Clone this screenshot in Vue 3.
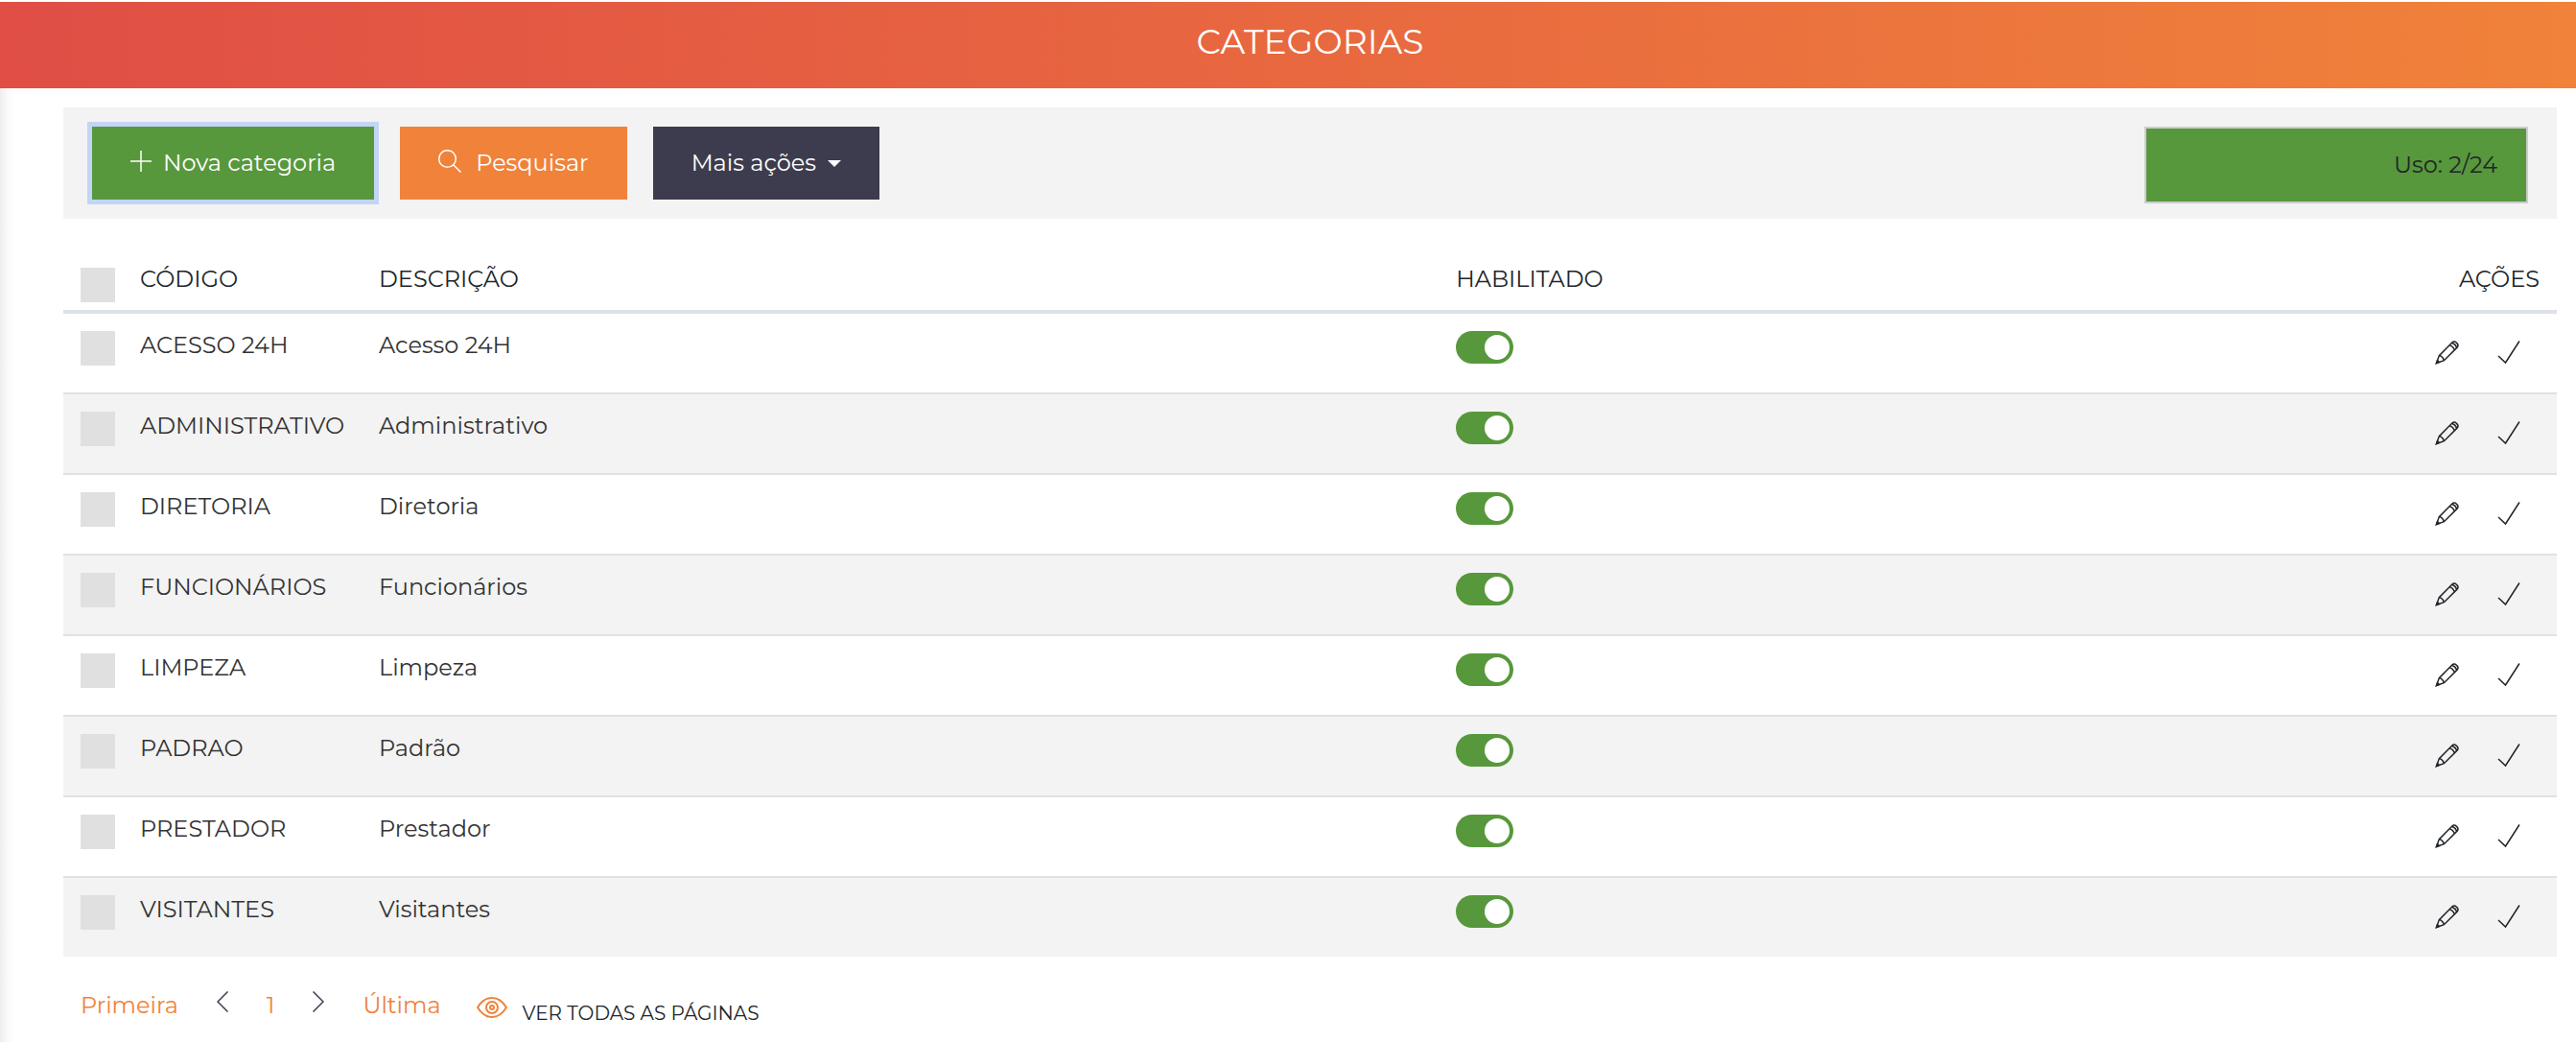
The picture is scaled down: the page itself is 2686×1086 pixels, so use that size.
<template>
  <div class="page">
    <header class="page-header">
      <h1>CATEGORIAS</h1>
    </header>

    <main class="content">
      <div class="toolbar">
        <button type="button" class="btn btn-new">
          <svg width="22" height="22" viewBox="0 0 22 22">
            <path d="M11 0v22M0 11h22" />
          </svg>
          <span>Nova categoria</span>
        </button>
        <button type="button" class="btn btn-search">
          <svg width="24" height="24" viewBox="0 0 24 24">
            <circle cx="9.5" cy="9.5" r="8.8" />
            <path d="M16 16l7.5 7.5" />
          </svg>
          <span>Pesquisar</span>
        </button>
        <button type="button" class="btn btn-more" aria-haspopup="true">
          <span>Mais ações</span>
          <span class="caret"></span>
        </button>
        <div class="usage">Uso: {{ usage.used }}/{{ usage.total }}</div>
      </div>

      <table class="categories">
        <colgroup>
          <col class="col-check" />
          <col class="col-code" />
          <col class="col-description" />
          <col />
          <col class="col-actions" />
        </colgroup>
        <thead>
          <tr>
            <th>
              <input v-model="allSelected" type="checkbox" class="check" aria-label="Selecionar todas" />
            </th>
            <th>CÓDIGO</th>
            <th>DESCRIÇÃO</th>
            <th>HABILITADO</th>
            <th class="right">AÇÕES</th>
          </tr>
        </thead>
        <tbody>
          <tr v-for="category in categories" :key="category.code">
            <td>
              <input v-model="category.selected" type="checkbox" class="check" :aria-label="category.code" />
            </td>
            <td>{{ category.code }}</td>
            <td>{{ category.description }}</td>
            <td>
              <input
                v-model="category.enabled"
                type="checkbox"
                role="switch"
                class="switch"
                :aria-label="'Habilitar ' + category.description"
              />
            </td>
            <td>
              <div class="actions">
                <button type="button" class="icon-btn" aria-label="Editar">
                  <svg width="26" height="26" viewBox="0 0 26 26">
                    <path d="M1.5 24.5l2.8-7.9L17.6 3.2a3.4 3.4 0 0 1 4.8 0l.4.4a3.4 3.4 0 0 1 0 4.800L9.400 21.700z" />
                    <path d="M4.300 16.600c2.300.6 4.300 2.600 5.100 5.100M15.200 5.600c2.300.8 4.300 2.800 5.200 5.200M17.600 3.200c2.300.8 4.300 2.800 5.200 5.200" />
                    <path class="tip" d="M1.500 24.500l1-2.800 1.800 1.800z" />
                  </svg>
                </button>
                <button type="button" class="icon-btn" aria-label="Confirmar">
                  <svg width="26" height="26" viewBox="0 0 26 26">
                    <path d="M2 17l7.500 7L24 1.500" />
                  </svg>
                </button>
              </div>
            </td>
          </tr>
        </tbody>
      </table>

      <nav class="pagination">
        <a href="#">Primeira</a>
        <a href="#" class="arrow" aria-label="Anterior">
          <svg width="12" height="22" viewBox="0 0 12 22">
            <path d="M11.5 0.5L1 11l10.500 10.500" />
          </svg>
        </a>
        <a href="#">1</a>
        <a href="#" class="arrow" aria-label="Próxima">
          <svg width="12" height="22" viewBox="0 0 12 22">
            <path d="M0.5 0.5L11 11L0.500 21.500" />
          </svg>
        </a>
        <a href="#">Última</a>
        <a href="#" class="show-all">
          <svg width="32" height="24" viewBox="0 0 32 24">
            <path d="M1 12C5 5.500 10 2 16 2s11 3.500 15 10c-4 6.500-9 10-15 10S5 18.500 1 12z" />
            <circle cx="16" cy="12" r="6" />
            <circle cx="16" cy="12" r="2" />
          </svg>
          <span>VER TODAS AS PÁGINAS</span>
        </a>
      </nav>
    </main>
  </div>
</template>

<script setup>
import { computed, ref } from 'vue';

const usage = { used: 2, total: 24 };

const categories = ref(
  [
    ['ACESSO 24H', 'Acesso 24H'],
    ['ADMINISTRATIVO', 'Administrativo'],
    ['DIRETORIA', 'Diretoria'],
    ['FUNCIONÁRIOS', 'Funcionários'],
    ['LIMPEZA', 'Limpeza'],
    ['PADRAO', 'Padrão'],
    ['PRESTADOR', 'Prestador'],
    ['VISITANTES', 'Visitantes'],
  ].map(([code, description]) => ({ code, description, enabled: true, selected: false }))
);

// Header checkbox toggles every row
const allSelected = computed({
  get: () => categories.value.every((category) => category.selected),
  set: (value) => {
    categories.value.forEach((category) => {
      category.selected = value;
    });
  },
});
</script>

<style>
body {
  margin: 0;
  background: #fff;
}
</style>

<style scoped>
.page {
  min-height: 100vh;
  box-sizing: border-box;
  padding-top: 2px;
  display: flex;
  flex-direction: column;
  font-family: Montserrat, Inter, sans-serif;
  font-size: 24px;
  line-height: 36px;
  color: #212529;
}

.page-header {
  height: 90px;
  box-sizing: border-box;
  padding: 20px 0 0 46px;
  background: linear-gradient(90deg, #e04e45, #f0823a);
}

h1 {
  margin: 0;
  font-size: 36px;
  line-height: 42px;
  font-weight: 400;
  text-align: center;
  color: #fff;
}

.content {
  flex: 1;
  padding: 20px 20px 20px 66px;
  background: linear-gradient(90deg, #ededed, #fafafa 8px, #fff 15px);
}

.toolbar {
  display: flex;
  align-items: flex-start;
  gap: 27px;
  padding: 20px 30px 16px;
  background: #f3f3f3;
}

.btn {
  display: flex;
  align-items: center;
  justify-content: center;
  height: 76px;
  padding: 0 40px;
  border: 0;
  font: inherit;
  color: #fff;
  white-space: nowrap;
  cursor: pointer;
}

.btn svg {
  margin-bottom: 4px;
}

.btn-new {
  gap: 12px;
  background: #57983c;
  box-shadow: 0 0 0 5px #c3d5f5;
}

.btn-search {
  gap: 15px;
  background: #f0823a;
}

.btn-more {
  gap: 12px;
  background: #3d3c4e;
}

.caret {
  border: 7px solid transparent;
  border-top-color: #fff;
  border-bottom: 0;
}

svg {
  display: block;
  fill: none;
  stroke: currentColor;
  stroke-width: 1.5;
}

.usage {
  box-sizing: border-box;
  width: 400px;
  height: 80px;
  margin-left: auto;
  padding: 20px 30px;
  border: 2px solid #ccc;
  background: #57983c;
  text-align: right;
}

.categories {
  width: 100%;
  margin-top: 28px;
  table-layout: fixed;
  border-collapse: separate;
  border-spacing: 0;
}

.col-check {
  width: 62px;
}

.col-code {
  width: 249px;
}

.col-description {
  width: 43.2%;
}

.col-actions {
  width: 180px;
}

th {
  padding: 17px 18px 8px;
  border-bottom: 4px solid #dee2e6;
  font-weight: 400;
  text-align: left;
  vertical-align: top;
}

th.right {
  text-align: right;
}

td {
  height: 52px;
  padding: 15px 18px;
  border-top: 2px solid #dee2e6;
  vertical-align: top;
  color: #333;
}

tbody tr:first-child td {
  border-top: 0;
}

tbody tr:nth-child(even) {
  background: #f3f3f3;
}

.check {
  display: block;
  appearance: none;
  width: 36px;
  height: 36px;
  margin: 3px 0 0;
  background: #e0e0e0;
}

th .check {
  margin-top: 6px;
}

.check:checked {
  background: #57983c;
}

.switch {
  display: block;
  appearance: none;
  box-sizing: border-box;
  width: 60px;
  height: 34px;
  margin: 3px 0 0;
  padding: 4px;
  border-radius: 17px;
  background: #ccc;
}

.switch::before {
  content: '';
  display: block;
  width: 26px;
  height: 26px;
  border-radius: 50%;
  background: #fff;
}

.switch:checked {
  background: #57983c;
}

.switch:checked::before {
  margin-left: auto;
}

.actions {
  display: flex;
  justify-content: flex-end;
  gap: 38px;
  padding: 12px 19px 0 0;
}

.icon-btn {
  padding: 0;
  border: 0;
  background: none;
  color: #212529;
  cursor: pointer;
}

.tip {
  fill: currentColor;
}

.pagination {
  display: flex;
  align-items: flex-start;
  padding: 33px 18px 0;
}

.pagination a {
  color: #f0823a;
  text-decoration: none;
}

.pagination .arrow {
  margin: 3px 40px 0;
  color: #3d3c4e;
}

.pagination .show-all {
  display: flex;
  gap: 16px;
  margin: 8px 0 0 37px;
  font-size: 20px;
}

.show-all svg {
  stroke-width: 2;
}

.show-all span {
  color: #212529;
}
</style>
